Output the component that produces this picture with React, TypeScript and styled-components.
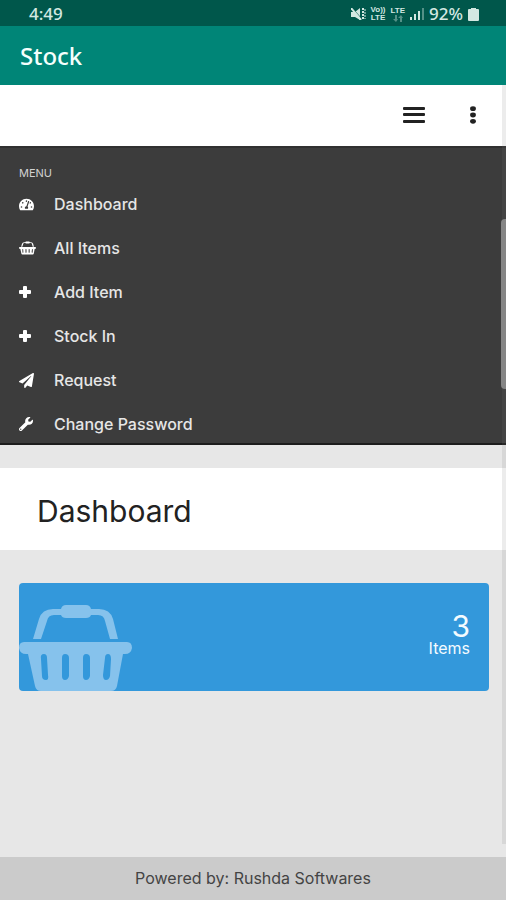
import React from "react";
import styled, { createGlobalStyle } from "styled-components";
import { FaPaperPlane, FaTachometerAlt, FaWrench } from "react-icons/fa";

const GlobalStyle = createGlobalStyle`
  * { box-sizing: border-box; }
  body { margin: 0; background: #e7e7e7; font-family: Inter, "Open Sans", sans-serif; }
  button { border: 0; padding: 0; background: none; font: inherit; color: inherit; cursor: pointer; }
`;

const Page = styled.div`
  display: flex;
  flex-direction: column;
  min-height: 100vh;
`;

const StatusBar = styled.div`
  display: flex;
  align-items: center;
  justify-content: space-between;
  height: 26px;
  padding: 2px 27px 0 29px;
  background: #00574b;
  color: #d3e8e2;
  font-family: "Noto Sans", sans-serif;
  font-size: 17px;
  font-weight: 500;
  line-height: 24px;
`;

const StatusIcons = styled.div`
  display: flex;
  align-items: center;
  gap: 5px;
  svg { display: block; fill: currentColor; }
`;

const NetworkLabel = styled.span`
  display: flex;
  flex-direction: column;
  align-items: center;
  font-family: "Liberation Sans", sans-serif;
  font-size: 8px;
  font-weight: 700;
  line-height: 8px;
`;

const AppBar = styled.header`
  display: flex;
  align-items: center;
  height: 59px;
  padding: 0 20px;
  background: #008577;
  color: #f4fffc;
  font-family: "Noto Sans", sans-serif;
  font-size: 24px;
  font-weight: 500;
`;

const WebView = styled.div`
  position: relative;
  flex: 1;
  display: flex;
  flex-direction: column;
`;

const ScrollTrack = styled.div`
  position: absolute;
  top: 0;
  right: 0;
  bottom: 13px;
  width: 4px;
  background: rgba(120, 120, 120, 0.14);
`;

const ScrollThumb = styled.div`
  position: absolute;
  top: 134px;
  right: 0;
  width: 5px;
  height: 170px;
  border-radius: 4px 0 0 4px;
  background: #858585;
`;

const Toolbar = styled.div`
  display: flex;
  justify-content: flex-end;
  align-items: center;
  gap: 36px;
  height: 61px;
  padding: 0 21px 2px 0;
  background: #fff;
`;

const IconButton = styled.button<{ $width: number }>`
  display: grid;
  place-items: center;
  width: ${(p) => p.$width}px;
  height: 32px;
  svg { display: block; fill: #222; }
`;

const Menu = styled.nav`
  padding: 17px 19px 5px;
  border-top: 2px solid #303030;
  border-bottom: 2px solid #1d1d1d;
  background: #3c3c3c;
  color: #e6e6e6;
`;

const MenuTitle = styled.div`
  margin-bottom: 9px;
  color: #d2d2d2;
  font-size: 11px;
  line-height: 16px;
`;

const MenuList = styled.ul`
  display: flex;
  flex-direction: column;
  gap: 16px;
  margin: 0;
  padding: 0;
  list-style: none;
`;

const MenuLink = styled.a`
  display: grid;
  grid-template-columns: 35px 1fr;
  align-items: center;
  height: 28px;
  color: inherit;
  font-size: 16px;
  font-weight: 500;
  text-decoration: none;
  svg { display: block; }
`;

const TitlePanel = styled.div`
  display: flex;
  align-items: center;
  height: 82px;
  margin-top: 23px;
  padding: 4px 37px 0;
  background: #fff;
`;

const Title = styled.h1`
  margin: 0;
  color: #222;
  font-size: 30px;
  font-weight: 400;
  line-height: 40px;
`;

const Card = styled.section`
  display: flex;
  justify-content: space-between;
  align-items: flex-end;
  height: 108px;
  margin: 33px 17px 33px 19px;
  padding-right: 19px;
  border-radius: 4px;
  background: #3398db;
  color: #f4fbff;
  overflow: hidden;
  svg { display: block; fill: #86c2ec; }
`;

const Figure = styled.div`
  align-self: center;
  padding-bottom: 6px;
  text-align: right;
`;

const Count = styled.div`
  font-size: 30px;
  line-height: 28px;
`;

const CountLabel = styled.div`
  font-size: 16px;
  line-height: 16px;
`;

const Footer = styled.footer`
  height: 43px;
  background: #cbcbcb;
  color: #444;
  font-size: 16px;
  line-height: 42px;
  text-align: center;
`;

function Basket({ width, height, color }: { width: number; height: number; color?: string }) {
  return (
    <svg width={width} height={height} viewBox="0 0 113 86" style={color ? { fill: color } : undefined} aria-hidden="true">
      <path d="M14 34 20 14Q23 4 34 4H42Q43 0 47 0H67Q71 0 72 4H80Q91 4 94 14L99 34H91L86 16Q85 10 79 10H72Q71 13 67 13H47Q43 13 42 10H35Q29 10 28 16L22 34Z" />
      <path
        fillRule="evenodd"
        d="M5 37H108Q113 37 113 43 112 49 106 49H104L98 81Q97 86 92 86H22Q17 86 16 81L9 49H7Q1 49 0 43 0 37 5 37ZM25 49Q21 49 22 54L23 71Q23 75 27 75 30 75 29 70L28 53Q28 49 25 49ZM46 49Q43 49 43 53V71Q43 75 46 75T50 71V53Q50 49 46 49ZM67 49Q64 49 64 53V71Q64 75 67 75T71 71V53Q71 49 67 49ZM89 49Q86 49 86 53L84 70Q84 75 87 75 90 75 91 71L92 54Q92 49 89 49Z"
      />
    </svg>
  );
}

function Plus() {
  return (
    <svg width="12" height="12" viewBox="0 0 12 12" fill="#fff" aria-hidden="true">
      <rect x="4" width="4" height="12" rx="1" />
      <rect y="4" width="12" height="4" rx="1" />
    </svg>
  );
}

const menuItems = [
  { label: "Dashboard", icon: <FaTachometerAlt size={15} color="#fff" /> },
  { label: "All Items", icon: <Basket width={17} height={14} color="#fff" /> },
  { label: "Add Item", icon: <Plus /> },
  { label: "Stock In", icon: <Plus /> },
  { label: "Request", icon: <FaPaperPlane size={15} color="#fff" /> },
  { label: "Change Password", icon: <FaWrench size={14} color="#fff" /> },
];

export default function App() {
  return (
    <Page>
      <GlobalStyle />
      <StatusBar>
        <span>4:49</span>
        <StatusIcons>
          <svg width="15" height="12" viewBox="0 0 15 12" aria-hidden="true">
            <path d="M0 4H4L9 0V12L4 9H0Z" />
            <path d="M1 0 11 11" stroke="#00574b" strokeWidth="1" />
            <path d="M0 0 10 12" stroke="currentColor" strokeWidth="2" />
            <path d="M12 0V12" stroke="currentColor" strokeWidth="2" strokeDasharray="2 1" />
            <path d="M14 1V11" stroke="currentColor" strokeWidth="1" strokeDasharray="2 1" />
          </svg>
          <NetworkLabel>
            <span>Vo))</span>
            <span>LTE</span>
          </NetworkLabel>
          <NetworkLabel>
            <span>LTE</span>
            <svg width="10" height="7" viewBox="0 0 10 7" opacity=".4" aria-hidden="true">
              <path d="M2 0H4V4H5L3 7 0 4H2ZM7 7V3H5L8 0 10 3H9V7Z" />
            </svg>
          </NetworkLabel>
          <svg width="14" height="12" viewBox="0 0 14 12" aria-hidden="true">
            <path d="M0 9H2V12H0ZM4 6H6V12H4ZM8 3H10V12H8Z" />
            <path d="M12 0H14V12H12Z" opacity=".4" />
          </svg>
          <span>92%</span>
          <svg width="11" height="13" viewBox="0 0 11 13" aria-hidden="true">
            <path d="M3 0H8V1H10Q11 1 11 2V12Q11 13 10 13H1Q0 13 0 12V2Q0 1 1 1H3Z" />
          </svg>
        </StatusIcons>
      </StatusBar>
      <AppBar>Stock</AppBar>
      <WebView>
        <Toolbar>
          <IconButton $width={22} aria-label="Toggle menu">
            <svg width="22" height="16" viewBox="0 0 22 16">
              <rect y="0" width="22" height="3" rx="1" />
              <rect y="6" width="22" height="3" rx="1" />
              <rect y="13" width="22" height="3" rx="1" />
            </svg>
          </IconButton>
          <IconButton $width={24} aria-label="More options">
            <svg width="6" height="18" viewBox="0 0 6 18">
              <ellipse cx="3" cy="2.7" rx="2.9" ry="2.4" />
              <ellipse cx="3" cy="9" rx="2.9" ry="2.4" />
              <ellipse cx="3" cy="15.3" rx="2.9" ry="2.4" />
            </svg>
          </IconButton>
        </Toolbar>
        <Menu>
          <MenuTitle>MENU</MenuTitle>
          <MenuList>
            {menuItems.map((item) => (
              <li key={item.label}>
                <MenuLink href="#">
                  {item.icon}
                  <span>{item.label}</span>
                </MenuLink>
              </li>
            ))}
          </MenuList>
        </Menu>
        <TitlePanel>
          <Title>Dashboard</Title>
        </TitlePanel>
        <Card>
          <Basket width={113} height={86} />
          <Figure>
            <Count>3</Count>
            <CountLabel>Items</CountLabel>
          </Figure>
        </Card>
        <ScrollTrack />
        <ScrollThumb />
      </WebView>
      <Footer>Powered by: Rushda Softwares</Footer>
    </Page>
  );
}
